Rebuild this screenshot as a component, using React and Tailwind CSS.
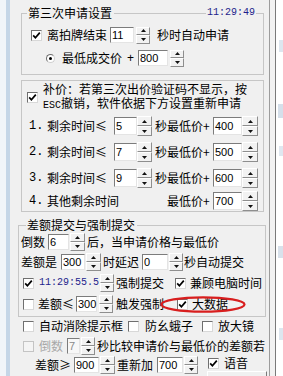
import React from "react";

const line = "border-[#c6c6c6]";

function Check({ checked, disabled, className = "" }) {
  return (
    <div
      className={
        "shrink-0 w-[11px] h-[11px] flex items-center justify-center border " +
        (disabled
          ? "bg-[#f4f4f4] border-[#c4c4c4] "
          : "bg-white border-t-[#6f6f6f] border-l-[#6f6f6f] border-b-[#d8d8d8] border-r-[#d8d8d8] ") +
        className
      }
    >
      {checked && (
        <svg width="9" height="9" viewBox="0 0 9 9">
          <path d="M1.2 4.4 L3.4 6.8 L7.8 1.6" fill="none" stroke="#000" strokeWidth="1.7" />
        </svg>
      )}
    </div>
  );
}

function Radio({ className = "" }) {
  return (
    <div
      className={
        "shrink-0 w-[9px] h-[9px] rounded-full bg-white border border-t-[#6f6f6f] border-l-[#6f6f6f] border-b-[#d0d0d0] border-r-[#d0d0d0] flex items-center justify-center " +
        className
      }
    >
      <div className="w-[3px] h-[3px] rounded-full bg-black" />
    </div>
  );
}

function Box({ className = "", children, disabled }) {
  return (
    <div
      className={
        "shrink-0 border border-t-[#7c7c7c] border-l-[#7c7c7c] border-b-[#e4e4e4] border-r-[#e4e4e4] pl-[1px] flex items-center text-[11px] leading-[13px] [font-family:'Liberation_Sans',sans-serif] " +
        (disabled ? "bg-[#f7f7f7] text-[#8a8a8a] " : "bg-white text-black ") +
        className
      }
    >
      {children}
    </div>
  );
}

function Arrow({ down }) {
  return (
    <svg width="5" height="3" viewBox="0 0 5 3">
      <path d={down ? "M0 0 L5 0 L2.5 3Z" : "M2.5 0 L5 3 L0 3Z"} fill="#111" />
    </svg>
  );
}

function Spin({ className = "" }) {
  return (
    <div className={"shrink-0 flex flex-col " + className}>
      <div className="flex-1 flex items-center justify-center bg-[#f2f2f2] border border-t-white border-l-white border-b-[#8e8e8e] border-r-[#8e8e8e]">
        <Arrow />
      </div>
      <div className="flex-1 flex items-center justify-center bg-[#f2f2f2] border border-t-white border-l-white border-b-[#8e8e8e] border-r-[#8e8e8e]">
        <Arrow down />
      </div>
    </div>
  );
}

function T({ className = "", children }) {
  return <span className={"shrink-0 whitespace-nowrap text-[12px] leading-[14px] " + className}>{children}</span>;
}

const mono = "[font-family:'Liberation_Mono',monospace]";

function PriceRow({ num, label, sec, price, className = "" }) {
  return (
    <div className={"flex items-center h-[20px] " + className}>
      <T className={"ml-[7px] w-[18px] text-[11px] " + mono}>{num}</T>
      <T className="w-[60px]">{label}</T>
      <Box className="ml-[7px] w-[23px] h-[18px]">{sec}</Box>
      <Spin className="w-[15px] h-[20px]" />
      <T className="ml-[3px] w-[58px]">秒最低价+</T>
      <Box className="w-[29px] h-[18px]">{price}</Box>
      <Spin className="w-[16px] h-[20px]" />
    </div>
  );
}

export default function App() {
  return (
    <div className="flex w-[283px] h-[376px] overflow-hidden bg-[#f0f0f0] text-black [font-family:'Noto_Sans_CJK_SC','Liberation_Sans',sans-serif]">
      <div className="w-[6px] shrink-0 bg-[#f1f5f9]" />
      <div className="w-[4px] shrink-0 bg-[#c5d6e7]" />

      {/* main panel */}
      <div className="w-[259px] shrink-0 flex flex-col pt-[6px] bg-[#f0f0f0]">
        {/* 第三次申请设置 */}
        <div className="ml-[11px] w-[243px]">
          <div className="flex items-center h-[14px]">
            <div className={"w-[6px] h-[7px] self-end border-l border-t " + line} />
            <T className="pl-[1px] pr-[2px]">第三次申请设置</T>
            <div className={"flex-1 h-[7px] self-end border-t " + line} />
            <span className={"px-[1px] text-[10px] leading-[14px] text-[#1e1e8c] " + mono}>11:29:49</span>
            <div className={"w-[8px] h-[7px] self-end border-t border-r " + line} />
          </div>
          <div className={"border-l border-r border-b pt-[7px] pb-[8px] " + line}>
            <div className="flex items-center h-[16px]">
              <Check checked className="ml-[9px]" />
              <T className="ml-[5px] w-[60px]">离拍牌结束</T>
              <Box className="ml-[3px] w-[24px] h-[16px]">11</Box>
              <Spin className="ml-[2px] w-[14px] h-[17px]" />
              <T className="ml-[7px]">秒时自动申请</T>
            </div>
            <div className="flex items-center h-[16px] mt-[7px]">
              <Radio className="ml-[24px]" />
              <T className="ml-[7px] w-[60px]">最低成交价</T>
              <T className="ml-[5px] w-[7px] [font-family:'Liberation_Sans',sans-serif]">+</T>
              <Box className="ml-[4px] w-[30px] h-[16px]">800</Box>
              <Spin className="ml-[2px] w-[14px] h-[17px]" />
            </div>
          </div>
        </div>

        {/* 补价 */}
        <div className={"ml-[11px] w-[243px] mt-[5px] border " + line}>
          <div className="flex items-center pt-[1px]">
            <Check checked className="ml-[5px]" />
            <div className="ml-[5px] flex flex-col text-[12px] whitespace-nowrap">
              <span className="leading-[14px]">补价：若第三次出价验证码不显示，按</span>
              <span className="leading-[14px]">
                <span className={"text-[10px] " + mono}>ESC</span>撤销，软件依据下方设置重新申请
              </span>
            </div>
          </div>
          <PriceRow className="mt-[3px]" num="1." label="剩余时间≤" sec="5" price="400" />
          <PriceRow className="mt-[6px]" num="2." label="剩余时间≤" sec="7" price="500" />
          <PriceRow className="mt-[6px]" num="3." label="剩余时间≤" sec="9" price="600" />
          <div className="flex items-center h-[20px] mt-[3px]">
            <T className={"ml-[7px] w-[18px] text-[11px] " + mono}>4.</T>
            <T className="w-[72px]">其他剩余时间</T>
            <T className="ml-[48px] w-[46px]">最低价+</T>
            <Box className="w-[29px] h-[18px]">700</Box>
            <Spin className="w-[16px] h-[20px]" />
          </div>
        </div>

        {/* 差额提交与强制提交 */}
        <div className="ml-[8px] w-[248px] mt-[6px]">
          <div className="flex items-center h-[14px]">
            <div className={"w-[8px] h-[7px] self-end border-l border-t " + line} />
            <T className="pl-[1px] pr-[2px]">差额提交与强制提交</T>
            <div className={"flex-1 h-[7px] self-end border-t border-r " + line} />
          </div>
          <div className={"border-l border-r border-b pt-[1px] pb-[3px] " + line}>
            <div className="flex items-center h-[18px]">
              <T className="ml-[2px] w-[24px]">倒数</T>
              <Box className="ml-[3px] w-[21px] h-[16px]">6</Box>
              <Spin className="ml-[1px] w-[15px] h-[18px]" />
              <T className="ml-[2px]">后，当申请价格与最低价</T>
            </div>
            <div className="flex items-center h-[18px] mt-[2px]">
              <T className="ml-[2px] w-[36px]">差额是</T>
              <Box className="ml-[4px] w-[24px] h-[16px]">300</Box>
              <Spin className="ml-[1px] w-[15px] h-[18px]" />
              <T className="ml-[2px] w-[36px]">时延迟</T>
              <Box className="ml-[3px] w-[26px] h-[16px]">0</Box>
              <Spin className="ml-[1px] w-[14px] h-[18px]" />
              <T className="ml-[1px]">秒自动提交</T>
            </div>
            <div className="flex items-center h-[18px] mt-[3px]">
              <Check checked className="ml-[4px]" />
              <span className={"ml-[5px] w-[60px] shrink-0 text-[10px] leading-[14px] text-[#1e1e8c] " + mono}>11:29:55.5</span>
              <Spin className="ml-[1px] w-[14px] h-[18px]" />
              <T className="ml-[2px] w-[48px]">强制提交</T>
              <Check checked className="ml-[11px]" />
              <T className="ml-[4px]">兼顾电脑时间</T>
            </div>
            <div className="flex items-center h-[18px] mt-[3px]">
              <Check className="ml-[4px]" />
              <T className="ml-[4px] w-[36px]">差额≤</T>
              <Box className="ml-[2px] w-[21px] h-[16px]">300</Box>
              <Spin className="ml-[2px] w-[14px] h-[18px]" />
              <T className="ml-[3px] w-[48px]">触发强制</T>
              <div className="relative ml-[13px] flex items-center">
                <Check checked />
                <T className="ml-[4px]">大数据</T>
                <svg
                  className="absolute left-[-17px] top-[-1px]"
                  width="86"
                  height="17"
                  viewBox="0 0 86 17"
                >
                  <ellipse cx="43" cy="8.5" rx="41.5" ry="7.2" fill="none" stroke="#d81e1e" strokeWidth="2.3" />
                </svg>
              </div>
            </div>
          </div>
        </div>

        {/* bottom options */}
        <div className="flex items-center h-[16px] mt-[2px]">
          <Check className="ml-[13px]" />
          <T className="ml-[5px] w-[84px]">自动消除提示框</T>
          <Check className="ml-[5px]" />
          <T className="ml-[6px] w-[48px]">防幺蛾子</T>
          <Check className="ml-[9px]" />
          <T className="ml-[5px]">放大镜</T>
        </div>
        <div className="flex items-center h-[18px] mt-[4px]">
          <Check disabled className="ml-[13px]" />
          <T className="ml-[5px] w-[24px] text-[#a8a8a8]">倒数</T>
          <Box disabled className="ml-[4px] w-[13px] h-[16px]">7</Box>
          <Spin className="ml-[1px] w-[14px] h-[18px]" />
          <T className="ml-[2px]">秒比较申请价与最低价的差额若</T>
        </div>
        <div className="flex items-start mt-[1px]">
          <div className="flex items-center h-[18px]">
            <T className="ml-[25px] w-[36px]">差额≥</T>
            <Box className="ml-[3px] w-[25px] h-[16px]">900</Box>
            <Spin className="ml-[1px] w-[15px] h-[18px]" />
            <T className="ml-[2px] w-[36px]">重新加</T>
            <Box className="ml-[4px] w-[26px] h-[16px]">700</Box>
            <Spin className="ml-[1px] w-[14px] h-[18px]" />
          </div>
          <div className="ml-[10px] flex flex-col">
            <div className="flex items-center h-[14px]">
              <Check checked />
              <T className="ml-[5px]">语音</T>
            </div>
            <div className="mt-[1px] -ml-[1px] w-[60px] h-[20px] bg-[#f0f0f0] border border-t-white border-l-white border-b-[#7a7a7a] border-r-[#7a7a7a] pl-[5px]">
              <T className="leading-[16px]">版本0.402</T>
            </div>
          </div>
        </div>
      </div>

      {/* neighbouring window edge */}
      <div className="w-px shrink-0 bg-[#9c9c9c]" />
      <div className="w-[5px] shrink-0 bg-[#f2f2f2]" />
      <div className="w-px shrink-0 bg-[#7a7a7a]" />
      <div className="flex-1 bg-white flex flex-col">
        <div className="mt-[40px] ml-[3px] w-[4px] h-[12px] bg-[#dde6ef]" />
        <div className="mt-[52px] ml-[2px] w-[5px] h-[14px] bg-[#d5dfea]" />
        <div className="mt-[28px] ml-[3px] w-[4px] h-[10px] bg-[#dfe7f0]" />
        <div className="mt-[90px] ml-[2px] w-[5px] h-[12px] bg-[#d8e1eb]" />
        <div className="mt-[70px] ml-[3px] w-[4px] h-[12px] bg-[#dde6ef]" />
      </div>
    </div>
  );
}
